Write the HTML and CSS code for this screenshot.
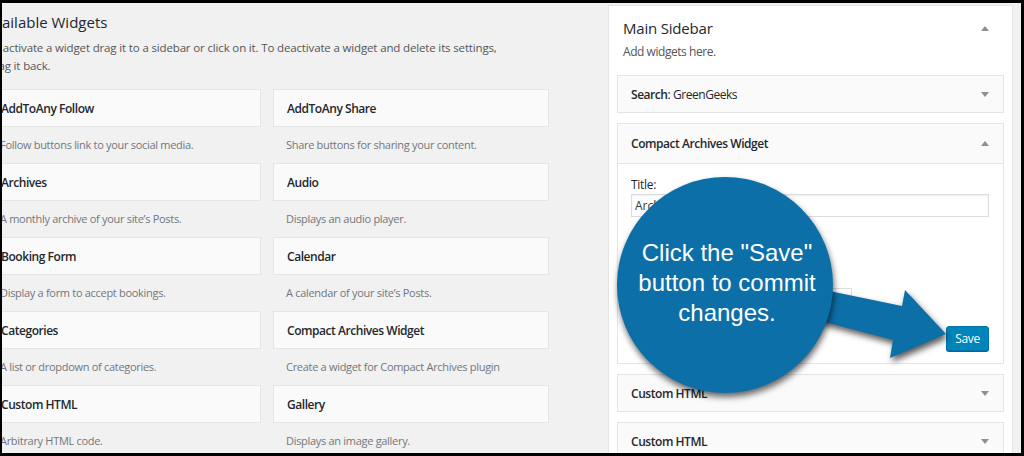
FILE: index.html
```html
<!DOCTYPE html>
<html lang="en">
<head>
    <meta charset="UTF-8">
    <title>Widgets</title>
    <link rel="stylesheet" href="styles.css">
</head>
<body>
    <div class="screen">
        <!-- Available widgets list -->
        <div class="available">
            <h2 class="avail-title">Available Widgets</h2>
            <p class="avail-desc">To activate a widget drag it to a sidebar or click on it. To deactivate a widget and delete its settings, drag it back.</p>
            <div class="widget-grid">
                <div class="widget"><div class="widget-top">AddToAny Follow</div><p class="widget-desc">Follow buttons link to your social media.</p></div>
                <div class="widget"><div class="widget-top">AddToAny Share</div><p class="widget-desc">Share buttons for sharing your content.</p></div>
                <div class="widget"><div class="widget-top">Archives</div><p class="widget-desc">A monthly archive of your site’s Posts.</p></div>
                <div class="widget"><div class="widget-top">Audio</div><p class="widget-desc">Displays an audio player.</p></div>
                <div class="widget"><div class="widget-top">Booking Form</div><p class="widget-desc">Display a form to accept bookings.</p></div>
                <div class="widget"><div class="widget-top">Calendar</div><p class="widget-desc">A calendar of your site’s Posts.</p></div>
                <div class="widget"><div class="widget-top">Categories</div><p class="widget-desc">A list or dropdown of categories.</p></div>
                <div class="widget"><div class="widget-top">Compact Archives Widget</div><p class="widget-desc">Create a widget for Compact Archives plugin</p></div>
                <div class="widget"><div class="widget-top">Custom HTML</div><p class="widget-desc">Arbitrary HTML code.</p></div>
                <div class="widget"><div class="widget-top">Gallery</div><p class="widget-desc">Displays an image gallery.</p></div>
            </div>
        </div>

        <!-- Main sidebar -->
        <div class="sidebar">
            <div class="sidebar-head">
                <h2>Main Sidebar</h2>
                <span class="toggle up"></span>
            </div>
            <p class="sidebar-desc">Add widgets here.</p>

            <div class="side-widget">
                <div class="widget-top"><span><b>Search</b>: GreenGeeks</span><span class="toggle"></span></div>
            </div>

            <div class="side-widget open">
                <div class="widget-top"><span><b>Compact Archives Widget</b></span><span class="toggle up"></span></div>
                <div class="widget-inside">
                    <label class="field-label">Title:</label>
                    <input class="field-input" type="text" value="Archives">
                    <div class="field-spacer"></div>
                    <div class="field-select"></div>
                    <div class="widget-actions">
                        <button class="button-primary">Save</button>
                    </div>
                </div>
            </div>

            <div class="side-widget">
                <div class="widget-top"><span><b>Custom HTML</b></span><span class="toggle"></span></div>
            </div>
            <div class="side-widget">
                <div class="widget-top"><span><b>Custom HTML</b></span><span class="toggle"></span></div>
            </div>
        </div>

        <!-- Callout overlay -->
        <svg class="arrow" viewBox="0 0 160 95" width="160" height="95">
            <polygon points="10,7 102,26 105,10 146,54 90,78 93,60 10,38" fill="#0c6fa7"/>
        </svg>
        <div class="callout">
            <p>Click the "Save" button to commit changes.</p>
        </div>
    </div>
</body>
</html>
```

FILE: styles.css
```css
/* Widgets screen */
* {
    box-sizing: border-box;
}
html, body {
    height: 100%;
}
body {
    margin: 0;
    padding: 3px 3px 3px 2px;
    background: #000;
    font-family: "Open Sans", Arial, sans-serif;
    color: #23282d;
}
.screen {
    position: relative;
    height: 100%;
    background: #f1f1f1;
    overflow: hidden;
    display: flex;
    align-items: flex-start;
}

/* Left column */
.available {
    flex: none;
    width: 562px;
    margin-left: -15px;
    padding-top: 8px;
}
.avail-title {
    margin: 0 0 0 -2px;
    font-size: 15px;
    font-weight: 400;
    line-height: 22px;
}
.avail-desc {
    margin: 6px 0 14px;
    max-width: 522px;
    font-size: 11.5px;
    line-height: 18px;
    letter-spacing: -0.15px;
    color: #555;
}
.widget-grid {
    display: grid;
    grid-template-columns: 274px 276px;
    column-gap: 12px;
}
.widget-top {
    height: 38px;
    padding: 0 13px;
    display: flex;
    align-items: center;
    background: #fafafa;
    border: 1px solid #e5e5e5;
    font-size: 12px;
    font-weight: 600;
    letter-spacing: -0.45px;
    color: #23282d;
}
.widget-desc {
    margin: 0;
    height: 36px;
    padding: 0 13px;
    line-height: 36px;
    font-size: 11px;
    letter-spacing: -0.3px;
    color: #72777c;
}

/* Sidebar */
.sidebar {
    flex: none;
    width: 405px;
    height: 470px;
    margin: 2px 0 0 59px;
    padding: 0 8px;
    background: #fff;
    border: 1px solid #e5e5e5;
}
.sidebar-head {
    display: flex;
    justify-content: space-between;
    align-items: center;
    padding: 10px 15px 0 6px;
}
.sidebar-head h2 {
    margin: 0;
    font-size: 15px;
    font-weight: 400;
    line-height: 24px;
    letter-spacing: -0.2px;
}
.sidebar-desc {
    margin: 3px 0 14px 6px;
    font-size: 12px;
    line-height: 18px;
    letter-spacing: -0.45px;
    color: #555;
}
.side-widget {
    margin-bottom: 10px;
}
.side-widget .widget-top {
    justify-content: space-between;
    padding: 0 14px 0 13px;
    font-weight: 400;
}
.side-widget .widget-top b {
    font-weight: 600;
}
.side-widget.open .widget-top {
    height: 40px;
    border-bottom: none;
}
.toggle {
    width: 0;
    height: 0;
    border-left: 4px solid transparent;
    border-right: 4px solid transparent;
    border-top: 5px solid #8c8f94;
}
.toggle.up {
    border-top: none;
    border-bottom: 5px solid #8c8f94;
}
.widget-inside {
    padding: 12px 14px 12px 13px;
    background: #fff;
    border: 1px solid #e5e5e5;
}
.field-label {
    display: block;
    font-size: 12px;
    line-height: 18px;
    letter-spacing: -0.3px;
}
.field-input {
    display: block;
    width: 100%;
    height: 23px;
    margin: 0;
    padding: 0 3px;
    border: 1px solid #ddd;
    box-shadow: inset 0 1px 2px rgba(0, 0, 0, 0.07);
    font-family: "Open Sans", Arial, sans-serif;
    font-size: 12px;
    color: #32373c;
}
.field-spacer {
    height: 71px;
}
.field-select {
    width: 221px;
    height: 23px;
    border: 1px solid #ddd;
}
.widget-actions {
    display: flex;
    justify-content: flex-end;
    margin-top: 15px;
}
.button-primary {
    height: 25px;
    padding: 0 8px;
    background: #0085ba;
    border: 1px solid #0073aa;
    border-radius: 3px;
    box-shadow: 0 1px 0 #006799;
    color: #fff;
    font-family: "Open Sans", Arial, sans-serif;
    font-size: 12px;
    letter-spacing: -0.3px;
}

/* Callout bubble and arrow */
.arrow {
    position: absolute;
    left: 798px;
    top: 277px;
    overflow: visible;
    filter: drop-shadow(2px 4px 3px rgba(0, 0, 0, 0.65));
}
.callout {
    position: absolute;
    left: 615px;
    top: 174px;
    width: 216px;
    height: 216px;
    border-radius: 50%;
    background: #0c6fa7;
    box-shadow: 1px 4px 6px rgba(0, 0, 0, 0.6);
    display: flex;
    align-items: center;
    justify-content: center;
}
.callout p {
    width: 200px;
    margin: 0 0 4px 4px;
    text-align: center;
    color: #fff;
    font-family: "Liberation Sans", Arial, sans-serif;
    font-size: 24px;
    line-height: 30px;
}
```
